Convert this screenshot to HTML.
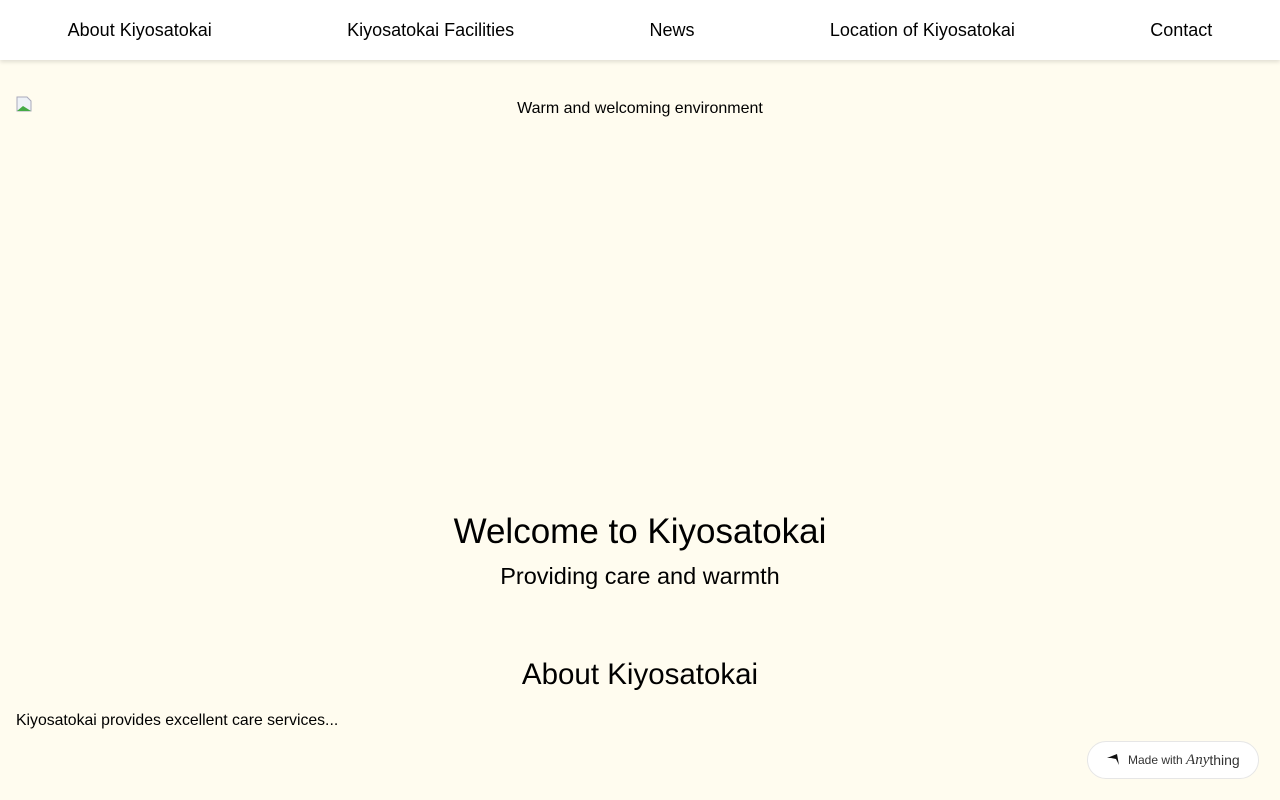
<!DOCTYPE html>
<html><head><meta charset="utf-8"><style>
body{margin:0;background:#fffcef;font-family:"Liberation Sans","IPAGothic",sans-serif;color:#000;}
nav{height:60px;background:#fff;box-shadow:0 2px 4px rgba(0,0,0,.12);display:flex;justify-content:space-around;align-items:center;font-size:18px;}
.img{position:absolute;left:16px;top:96px;width:1248px;height:384px;text-align:center;font-size:16px;}
.img span{display:inline-block;margin-top:4px}
.ic{position:absolute;left:0;top:0;width:16px;height:16px}
h1{position:absolute;top:512px;left:0;right:0;margin:0;text-align:center;font-weight:normal;font-size:35px;}
.sub{position:absolute;top:563px;left:0;right:0;text-align:center;font-size:23.5px;}
h2{position:absolute;top:658px;left:0;right:0;margin:0;text-align:center;font-weight:normal;font-size:29.5px;}
p{position:absolute;top:712px;left:16px;margin:0;font-size:15.8px;}
.badge{position:absolute;left:1087px;top:741px;width:172px;height:38px;border:1px solid #e6e6e6;border-radius:20px;background:#fff;box-sizing:border-box;font-size:12px;color:#333;display:flex;align-items:center;}
</style></head><body>
<nav><span>About Kiyosatokai</span><span>Kiyosatokai Facilities</span><span>News</span><span>Location of Kiyosatokai</span><span>Contact</span></nav>
<div class="img"><svg class="ic" viewBox="0 0 16 16"><path d="M1 1h10l4 4v10H1z" fill="#eef2f7" stroke="#aab"/><path d="M1 15l6-5 8 5z" fill="#4a4"/></svg><span>Warm and welcoming environment</span></div>
<h1>Welcome to Kiyosatokai</h1>
<div class="sub">Providing care and warmth</div>
<h2>About Kiyosatokai</h2>
<p>Kiyosatokai provides excellent care services...</p>
<div class="badge"><svg style="margin-left:18px;margin-right:8px" width="14" height="12" viewBox="0 0 14 12"><path d="M1 4L11 0L13 11L10 5L5 4Z" fill="#111"/></svg>Made with&nbsp;<i style="font-family:'Liberation Serif',serif;font-size:15px">Any</i><span style="font-size:14px">thing</span></div>
</body></html>
